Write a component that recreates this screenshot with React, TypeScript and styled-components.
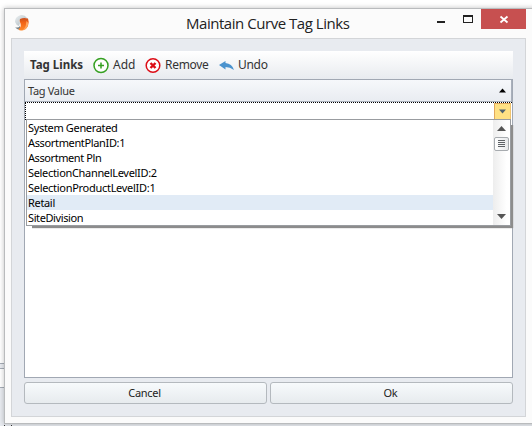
import React from "react";
import styled, { createGlobalStyle, css } from "styled-components";

const GlobalStyle = createGlobalStyle`
  * { box-sizing: border-box; }
  html, body { margin: 0; overflow: hidden; }
`;

const Desktop = styled.main`
  position: relative;
  width: 532px;
  height: 426px;
  padding: 8px 0 0 4px;
  overflow: hidden;
  background: #fff;
  color: #333;
  font: 11px/15px "Noto Sans", sans-serif;
`;

const BackgroundPane = styled.div<{ $top: number; $height: number; $fill: string; $lined?: boolean }>`
  position: absolute;
  left: 0;
  width: 100%;
  top: ${(p) => p.$top}px;
  height: ${(p) => p.$height}px;
  background: ${(p) => p.$fill};
  ${(p) => p.$lined && css`border-top: 1px solid #a5acb5; border-bottom: 1px solid #a5acb5;`}
`;

const BackgroundMarks = styled.svg`
  position: absolute;
  left: 4px;
  top: 425px;
`;

const Window = styled.section`
  position: relative;
  width: 540px;
  height: 416px;
  padding: 0 0 0 6px;
  border: 1px solid #b9bbbd;
  background: #fbfbfb;
  box-shadow: 0 0 5px rgba(0, 0, 0, 0.25);
`;

const TitleBar = styled.header`
  display: flex;
  width: 515px;
  height: 29px;
  padding-left: 3px;
`;

const AppIcon = styled.svg`
  flex: none;
  width: 16px;
  height: 18px;
  margin-top: 5px;
`;

const Title = styled.h1`
  flex: 1;
  margin: 0;
  padding: 4px 0 0 156px;
  color: #222;
  font: 400 15px/20px "Open Sans", sans-serif;
  letter-spacing: -0.46px;
  white-space: nowrap;
`;

const WindowControls = styled.div`
  display: flex;
  flex: none;
`;

const WindowButton = styled.button<{ $width: number; $danger?: boolean }>`
  display: block;
  width: ${(p) => p.$width}px;
  height: 20px;
  padding: 0;
  border: 0;
  background: ${(p) => (p.$danger ? "#c75050" : "transparent")};
  svg { display: block; }
`;

const Panel = styled.div`
  width: 515px;
  height: 379px;
  padding: 12px;
  border: 1px solid #d3d5d8;
  background: #e8ebf0;
`;

const Toolbar = styled.div`
  display: flex;
  height: 28px;
  padding-left: 6px;
  background: linear-gradient(#fff, #e8ebef);
  font-size: 12px;
  line-height: 28px;
`;

const ToolbarTitle = styled.strong`
  width: 63px;
  font-size: 11.5px;
  white-space: nowrap;
`;

const ToolButton = styled.button<{ $width: number; $spacing?: number }>`
  display: flex;
  align-items: center;
  gap: 4px;
  width: ${(p) => p.$width}px;
  padding: 0;
  border: 0;
  background: none;
  color: #333;
  font: inherit;
  letter-spacing: ${(p) => p.$spacing ?? 0}px;
  svg { flex: none; }
`;

const Grid = styled.div`
  position: relative;
  height: 299px;
  border: 1px solid #a1a8b3;
  background: #fff;
`;

const GridHeader = styled.div`
  display: flex;
  align-items: center;
  justify-content: space-between;
  height: 22px;
  padding: 0 5px 0 3px;
  border-right: 1px solid #a9b0bb;
  border-bottom: 1px solid #a9b0bb;
  background: linear-gradient(#f6f8fb, #e9ecf1);
  letter-spacing: -0.32px;
`;

const EditRow = styled.div`
  display: flex;
  justify-content: flex-end;
  height: 18px;
  border-top: 1px dotted #000;
  border-left: 1px dotted #000;
`;

const ComboButton = styled.button`
  display: flex;
  align-items: center;
  justify-content: center;
  width: 17px;
  height: 17px;
  margin-right: 1px;
  padding: 0;
  border: 1px solid #e1a85d;
  border-right-color: #f0c36d;
  border-bottom-color: #f0c36d;
  background: #ffe184;
`;

const Dropdown = styled.div`
  position: absolute;
  top: 39px;
  left: 1px;
  display: flex;
  width: 485px;
  height: 107px;
  border: 1px solid #999ca0;
  background: #fff;
  box-shadow: 2px 2px 1px #8c8c8c;
  clip-path: polygon(0 0, 485px 0, 485px 6px, 489px 6px, 489px 111px, 6px 111px, 6px 107px, 0 107px);
`;

const Options = styled.div`
  flex: 1;
`;

const Option = styled.div<{ $selected?: boolean; $spacing: number }>`
  height: 15px;
  padding-left: 1px;
  background: ${(p) => (p.$selected ? "#e1ebf6" : "transparent")};
  color: #000;
  letter-spacing: ${(p) => p.$spacing}px;
  white-space: nowrap;
`;

const Scrollbar = styled.div`
  display: flex;
  flex-direction: column;
  align-items: center;
  width: 17px;
  padding: 6px 0;
  background: linear-gradient(90deg, #ededed, #fff 80%);
  svg { flex: none; display: block; }
`;

const Thumb = styled.div`
  display: flex;
  flex-direction: column;
  gap: 1px;
  width: 15px;
  height: 14px;
  margin: 6px 0 auto;
  padding: 2px 3px;
  border: 1px solid #a7abaf;
  border-radius: 2px;
  background: linear-gradient(90deg, #fff, #e7e9eb);
`;

const Grip = styled.i`
  height: 1px;
  background: #5e6266;
`;

const Actions = styled.div`
  display: grid;
  grid-template-columns: 243px 243px;
  gap: 3px;
  margin-top: 4px;
`;

const ActionButton = styled.button`
  height: 22px;
  padding: 0 2px 1px 0;
  border: 1px solid #b4b9be;
  border-radius: 3px;
  background: linear-gradient(#f7fafc, #e7ebee);
  color: #222;
  font: 11px/18px "Noto Sans", sans-serif;
  letter-spacing: -0.3px;
`;

const options = [
  { label: "System Generated", spacing: -0.34 },
  { label: "AssortmentPlanID:1", spacing: -0.35 },
  { label: "Assortment Pln", spacing: -0.42 },
  { label: "SelectionChannelLevelID:2", spacing: -0.32 },
  { label: "SelectionProductLevelID:1", spacing: -0.29 },
  { label: "Retail", spacing: -0.33, selected: true },
  { label: "SiteDivision", spacing: -0.4 },
];

function Logo() {
  return (
    <AppIcon viewBox="0 0 16 18">
      <defs>
        <linearGradient id="silver" x2="1" y2="1"><stop stopColor="#eef2f4" /><stop offset=".6" stopColor="#c3ccd0" /><stop offset="1" stopColor="#8d999f" /></linearGradient>
        <linearGradient id="orange" y2="1" x2="0"><stop stopColor="#c8501f" /><stop offset=".35" stopColor="#f26315" /><stop offset="1" stopColor="#ff8b2b" /></linearGradient>
      </defs>
      <path d="M1 8C1 3 5 1 8 1Q11 1 13 4L7 4.5Q5 6 6 9L5 12Q2 11 1 8Z" fill="url(#silver)" />
      <path d="M1 13Q4 14.5 6 12L6 16Q3 16 1 13Z" fill="#78858c" />
      <path d="M6 5Q9 3.5 14 4.5Q15.5 8 14 12Q12 16 8 16.5Q5 17 4.5 15Q7.5 13 6.5 9.5Q5 7 6 5Z" fill="url(#orange)" />
      <path d="M12.5 7Q14.5 8 14 11Q13 15 8.5 16.5Q12 13 12 10Z" fill="#ffa55c" />
    </AppIcon>
  );
}

function Arrow({ down = false, width = 9, color = "#555" }: { down?: boolean; width?: number; color?: string }) {
  return <svg width={width} height="5" viewBox="0 0 9 5"><path d={down ? "M0 0h9L4.5 5z" : "M0 5h9L4.5 0z"} fill={color} /></svg>;
}

export default function App() {
  return (
    <>
      <GlobalStyle />
      <Desktop>
        <BackgroundPane $top={363} $height={63} $fill="#e8ebf0" />
        <BackgroundPane $top={363} $height={1} $fill="#a5acb5" />
        <BackgroundPane $top={368} $height={20} $fill="#fff" $lined />
        <Window>
          <TitleBar>
            <Logo />
            <Title>Maintain Curve Tag Links</Title>
            <WindowControls>
              <WindowButton $width={28} aria-label="Minimize"><svg width="28" height="20"><path d="M4 12h8v2H4z" fill="#222" /></svg></WindowButton>
              <WindowButton $width={20} aria-label="Maximize"><svg width="20" height="20"><path fillRule="evenodd" d="M2 6h10v8H2zM3 8h8v5H3z" fill="#222" /></svg></WindowButton>
              <WindowButton $width={45} $danger aria-label="Close"><svg width="45" height="20"><path d="M19.5 7.5l7 6M26.5 7.5l-7 6" stroke="#fff" strokeWidth="1.8" /></svg></WindowButton>
            </WindowControls>
          </TitleBar>
          <Panel>
            <Toolbar>
              <ToolbarTitle>Tag Links</ToolbarTitle>
              <ToolButton $width={52}>
                <svg width="16" height="17"><circle cx="8" cy="8.5" r="7" fill="#fff" stroke="#35a021" strokeWidth="1.5" /><path d="M8 5.5v6M5 8.5h6" stroke="#35a021" strokeWidth="1.5" /></svg>Add
              </ToolButton>
              <ToolButton $width={74} $spacing={-0.3}>
                <svg width="16" height="17"><circle cx="8" cy="8.5" r="6.8" fill="#fff" stroke="#dc0d16" strokeWidth="1.5" /><path d="M5.5 6l5 5M10.5 6l-5 5" stroke="#dc0d16" strokeWidth="2.4" /></svg>Remove
              </ToolButton>
              <ToolButton $width={60} $spacing={-0.3}>
                <svg width="15" height="9"><path d="M0 4L6.500 0v2Q13 2.500 15 9Q11 6 6.500 6v2.500z" fill="#4b93ce" /></svg>Undo
              </ToolButton>
            </Toolbar>
            <Grid>
              <GridHeader>Tag Value<Arrow width={7} color="#000" /></GridHeader>
              <EditRow><ComboButton aria-label="Open list"><Arrow down width={7} color="#51636f" /></ComboButton></EditRow>
              <Dropdown>
                <Options>{options.map((o) => <Option key={o.label} $selected={o.selected} $spacing={o.spacing}>{o.label}</Option>)}</Options>
                <Scrollbar><Arrow /><Thumb><Grip /><Grip /><Grip /><Grip /></Thumb><Arrow down /></Scrollbar>
              </Dropdown>
            </Grid>
            <Actions><ActionButton>Cancel</ActionButton><ActionButton>Ok</ActionButton></Actions>
          </Panel>
        </Window>
        <BackgroundMarks width="8" height="1"><path d="M0 0h1v1H0zM7 0h1v1H7z" fill="#333" /></BackgroundMarks>
      </Desktop>
    </>
  );
}
